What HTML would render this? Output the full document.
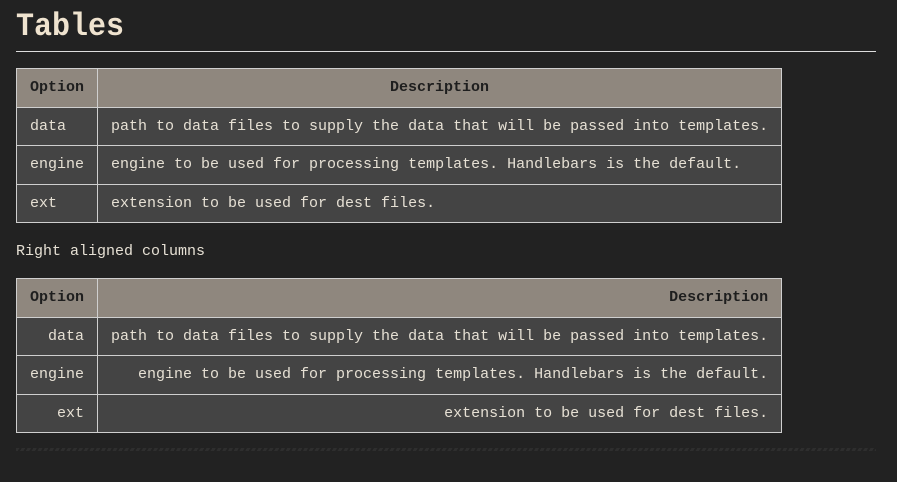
<!DOCTYPE html>
<html><head><style>
body{margin:0;background:#222222;width:897px;height:482px;overflow:hidden;font-family:"Liberation Mono",monospace;font-size:15px;color:#e6e0d4}
h1{position:absolute;left:16px;top:9px;margin:0;font-size:30px;font-weight:bold;color:#efe3cf;transform:scaleY(1.08);transform-origin:0 0}
.hr{position:absolute;left:16px;top:51px;width:860px;height:1px;background:#ddd}
table{position:absolute;left:16px;width:766px;border-collapse:collapse}
td,th{border:1px solid #cfcfcf;height:37.5px;padding:0 13px;background:#444;white-space:nowrap}
th{background:#8f877e;color:#1e1e1e;font-weight:bold}
.r td,.r th{text-align:right}
td:first-child,th:first-child{width:54px}
p{position:absolute;left:16px;top:243px;margin:0}
.dash{position:absolute;left:16px;top:448px;width:860px;height:3px;background:repeating-linear-gradient(120deg,#2e2e2e 0 3px,#222 3px 5px)}
</style></head><body>
<h1>Tables</h1>
<div class="hr"></div>
<table style="top:68px">
<tr><th style="text-align:center">Option</th><th style="text-align:center">Description</th></tr>
<tr><td>data</td><td>path to data files to supply the data that will be passed into templates.</td></tr>
<tr><td>engine</td><td>engine to be used for processing templates. Handlebars is the default.</td></tr>
<tr><td>ext</td><td>extension to be used for dest files.</td></tr>
</table>
<p>Right aligned columns</p>
<table class="r" style="top:278px">
<tr><th style="text-align:center">Option</th><th>Description</th></tr>
<tr><td>data</td><td>path to data files to supply the data that will be passed into templates.</td></tr>
<tr><td>engine</td><td>engine to be used for processing templates. Handlebars is the default.</td></tr>
<tr><td>ext</td><td>extension to be used for dest files.</td></tr>
</table>
<div class="dash"></div>
</body></html>
